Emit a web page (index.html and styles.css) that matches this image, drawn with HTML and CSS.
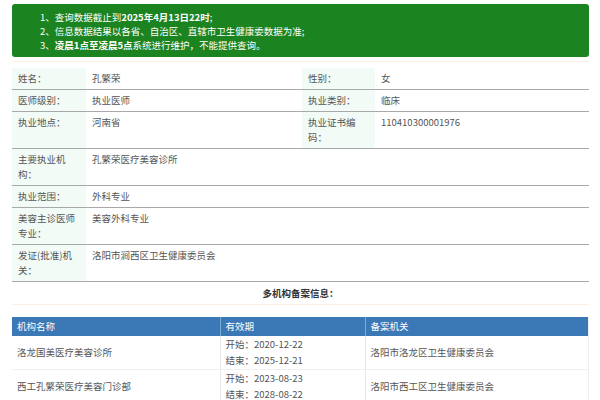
FILE: index.html
```html
<!DOCTYPE html>
<html lang="zh-CN">
<head>
<meta charset="utf-8">
<title>医师信息</title>
<link rel="stylesheet" href="styles.css">
</head>
<body>
<div class="wrap">
  <div class="notice">
    <div>1、查询数据截止到<b>2025年4月13日22时</b>;</div>
    <div>2、信息数据结果以各省、自治区、直辖市卫生健康委数据为准;</div>
    <div>3、<b>凌晨1点至凌晨5点</b>系统进行维护，不能提供查询。</div>
  </div>

  <div class="info">
    <div class="row">
      <div class="lab">姓名：</div><div class="val">孔繁荣</div>
      <div class="lab">性别：</div><div class="val">女</div>
    </div>
    <div class="row">
      <div class="lab">医师级别：</div><div class="val">执业医师</div>
      <div class="lab">执业类别：</div><div class="val">临床</div>
    </div>
    <div class="row">
      <div class="lab">执业地点：</div><div class="val">河南省</div>
      <div class="lab">执业证书编码：</div><div class="val">110410300001976</div>
    </div>
    <div class="row wide">
      <div class="lab">主要执业机构：</div><div class="val">孔繁荣医疗美容诊所</div>
    </div>
    <div class="row wide">
      <div class="lab">执业范围：</div><div class="val">外科专业</div>
    </div>
    <div class="row wide">
      <div class="lab">美容主诊医师专业：</div><div class="val">美容外科专业</div>
    </div>
    <div class="row wide">
      <div class="lab">发证(批准)机关：</div><div class="val">洛阳市涧西区卫生健康委员会</div>
    </div>
  </div>

  <div class="heading">多机构备案信息：</div>

  <table class="records">
    <thead>
      <tr><th class="c1">机构名称</th><th class="c2">有效期</th><th class="c3">备案机关</th></tr>
    </thead>
    <tbody>
      <tr>
        <td>洛龙国美医疗美容诊所</td>
        <td>开始：2020-12-22<br>结束：2025-12-21</td>
        <td>洛阳市洛龙区卫生健康委员会</td>
      </tr>
      <tr>
        <td>西工孔繁荣医疗美容门诊部</td>
        <td>开始：2023-08-23<br>结束：2028-08-22</td>
        <td>洛阳市西工区卫生健康委员会</td>
      </tr>
    </tbody>
  </table>
</div>
</body>
</html>
```

FILE: styles.css
```css
* { box-sizing: border-box; }
html, body { margin: 0; padding: 0; background: #fff; }
body {
  font-family: "Noto Sans CJK SC", "Noto Sans", sans-serif;
  font-size: 9.5px;
  color: #555;
}
.wrap {
  width: 577px;
  margin-left: 12px;
  padding-top: 4px;
}
.notice {
  background: #1b8421;
  border-radius: 3px;
  color: #fff;
  line-height: 14px;
  padding: 6px 0 5px 28px;
  height: 53px;
}
.notice b { font-weight: bold; }

.info {
  margin-top: 4px;
  border-top: 1px solid #fcf0e6;
  padding-top: 6px;
}
.row {
  display: grid;
  grid-template-columns: 74px 216px 73px 214px;
  border-bottom: 1px solid #a9a9a9;
  line-height: 15px;
}
.row.wide { grid-template-columns: 74px 503px; }
.lab {
  background: #f2fbf5;
  padding: 3px 6px 3px 6px;
}
.val {
  padding: 3px 6px;
  color: #555;
}

.heading {
  text-align: center;
  font-weight: bold;
  color: #333;
  line-height: 15px;
  padding: 4px 0 3px;
  border-bottom: 1px solid #fcf0e6;
}

.records {
  margin-top: 12px;
  width: 577px;
  border-collapse: collapse;
  table-layout: fixed;
  border-right: 1px solid #eeeeee;
}
.records th {
  background: #3a78b6;
  color: #fff;
  font-weight: normal;
  text-align: left;
  height: 19px;
  line-height: 15px;
  padding: 2px 5px;
  border-left: 1px solid #7fa8d2;
}
.records th.c1 { width: 208px; border-left: none; }
.records th.c2 { width: 145px; }
.records td {
  padding: 0 5px 1px;
  line-height: 16px;
  height: 33px;
  color: #555;
  border-bottom: 1px solid #f0f0f0;
  border-left: 1px solid #e8e8e8;
  vertical-align: middle;
}
.records td:first-child { border-left: none; }
```
